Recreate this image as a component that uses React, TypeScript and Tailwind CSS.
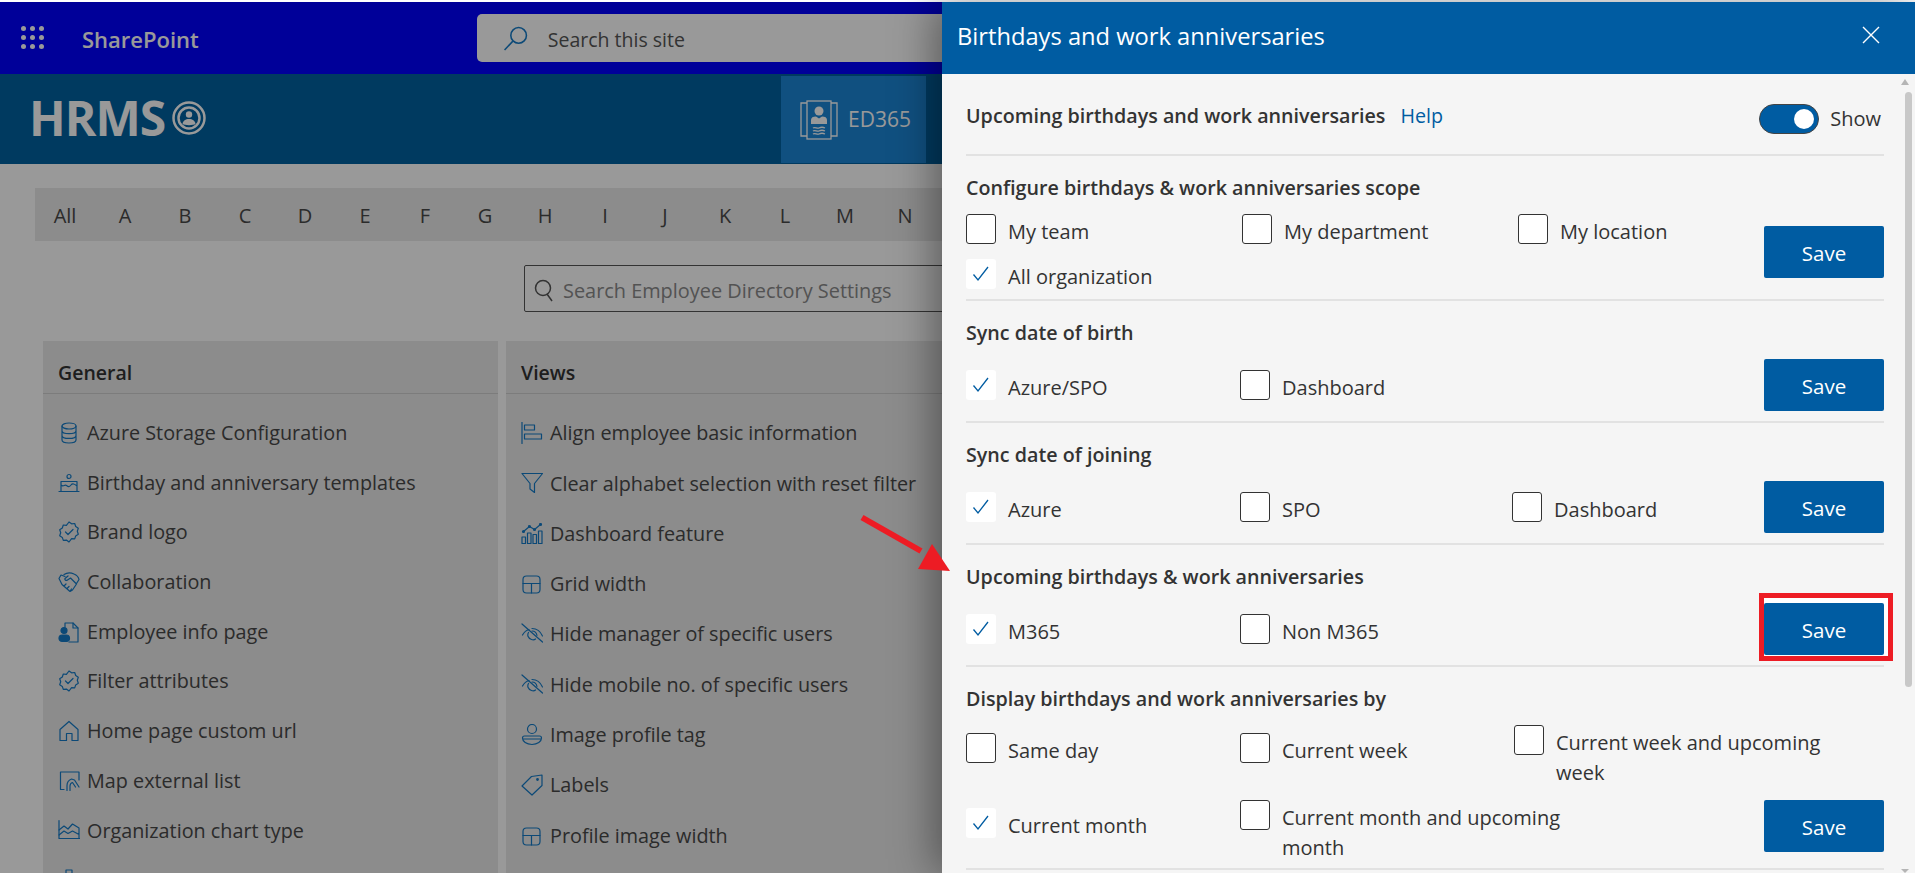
import type { ReactNode } from "react";

const Svg = ({ children }: { children: ReactNode }) => (
  <svg viewBox="0 0 22 22" fill="none" stroke="currentColor" strokeWidth="1.2" strokeLinecap="round" strokeLinejoin="round" className="w-[22px] h-[22px] shrink-0 text-[#157bc7]">
    {children}
  </svg>
);

const DatabaseIcon = () => (
  <Svg>
    <ellipse cx="11" cy="4" rx="7" ry="3" />
    <path d="M4 4v14c0 1.7 3.1 3 7 3s7-1.3 7-3V4M4 8.7c0 1.7 3.1 3 7 3s7-1.3 7-3M4 13.4c0 1.7 3.1 3 7 3s7-1.3 7-3" />
  </Svg>
);
const CakeIcon = () => (
  <Svg>
    <circle cx="11" cy="4.500" r="2" />
    <path d="M1 19.500h20M3 19.500V9.500h16v10M3 13c2.500 2.500 3.500-1 5.500 0.500s3 1.500 4.500-0.500 3.500-1 6 1" />
  </Svg>
);
const BadgeIcon = () => (
  <Svg>
    <path d="M11 1l2.600 1.800 3.100-.3 1 3 2.600 1.700-1 3 1 3-2.600 1.700-1 3-3.100-.3L11 21l-2.600-1.900-3.100.3-1-3-2.600-1.700 1-3-1-3 2.600-1.700 1-3 3.100.3z" />
    <path d="M7.500 11l2.500 2.500 5-5" />
  </Svg>
);
const HandshakeIcon = () => (
  <Svg>
    <path d="M6 3.500C9 1.500 13 1.500 16 3c2.500 1 4.500 3 5 5.500l-2.500 4M1 7.500l2-3.500 4 1.500M1 7.500l3 6 8 7 2.500-1.500 2-3 2-3-6-6-3 2c-1.500 1-3 0-2.500-1.500L10 5M6 15l2-2M9 17.500l2-2M12 20l1.500-2" />
  </Svg>
);
const EmployeePageIcon = () => (
  <Svg>
    <path d="M7 6V2h8l5 5v14H11" />
    <path d="M15 2v5h5" />
    <circle cx="6" cy="9.500" r="3" fill="currentColor" />
    <rect x="1" y="14" width="10.500" height="6.500" rx="3.200" fill="currentColor" />
  </Svg>
);
const HomeIcon = () => (
  <Svg>
    <path d="M2 9.500L11 1.500l9 8V20.500h-6v-7H8.500v7H2z" />
  </Svg>
);
const MapIcon = () => (
  <Svg>
    <path d="M2.500 19.500V2H21v8M2.500 19.500H6" />
    <path d="M9 20.500v-5c0-3 2-5.500 4.500-6.500l3 1 4.500 7M12 20.500v-4.500c0-1.500 1-3 2.500-3.500l3 4.500" />
  </Svg>
);
const ChartIcon = () => (
  <Svg>
    <path d="M1 1.500v18h20.500" />
    <path d="M1 11l5-4 4 3 4.500-5 6.500 4v10.500M1 16l5-4 4 2.500 4.500-2.500 6.500 3.500" />
  </Svg>
);
const OrgIcon = () => (
  <Svg>
    <rect x="8" y="1" width="6" height="5" />
    <path d="M11 6v6M3 18v-6h16v6" />
  </Svg>
);
const AlignIcon = () => (
  <Svg>
    <path d="M1 0.500v21" />
    <rect x="3.500" y="3" width="10" height="5" />
    <rect x="3.500" y="12" width="17" height="5" />
  </Svg>
);
const FunnelIcon = () => (
  <Svg>
    <path d="M1 1.500h20.500l-8 10v9l-4.500-3.500v-5.500z" />
  </Svg>
);
const BarsIcon = () => (
  <Svg>
    <rect x="1" y="14" width="3.500" height="6.500" />
    <rect x="6.500" y="10" width="3.500" height="10.500" />
    <rect x="12" y="11.500" width="3.500" height="9" />
    <rect x="17.500" y="8" width="3.500" height="12.500" />
    <path d="M2.500 8.500l6-5 5 3 6-5" />
    <circle cx="2.500" cy="8.500" r="1" />
    <circle cx="8.500" cy="3.500" r="1" />
    <circle cx="13.500" cy="6.500" r="1" />
    <circle cx="19.500" cy="1.500" r="1" />
  </Svg>
);
const LayoutIcon = () => (
  <Svg>
    <rect x="2" y="3" width="17" height="17" rx="3.500" />
    <path d="M2 10.500h17M10.500 10.500V20" />
  </Svg>
);
const EyeOffIcon = () => (
  <Svg>
    <path d="M1 1l20.500 18" />
    <path d="M1.500 12C3.500 8.500 6 7 8 6.500M11 5.500c4.500 0 8.500 3 10.500 7.500M7.500 9.500c-1.500 2.500-.5 6 3 7 1.500.5 3 .3 4-.5M11 8c2.500 0 4.500 2 5 4.500" />
  </Svg>
);
const UserIcon = () => (
  <Svg>
    <circle cx="11" cy="5" r="4.500" />
    <path d="M3.500 12h15c1 0 2 .8 2 2 0 3.500-4 6.500-9.500 6.500S1.500 17.500 1.500 14c0-1.200 1-2 2-2zM1.700 15h18.600" />
  </Svg>
);
const TagIcon = () => (
  <Svg>
    <path d="M1 12L10.500 2.500 21 1v10.500L11 21z" />
    <circle cx="16.500" cy="5.500" r="0.800" fill="currentColor" />
  </Svg>
);

const general: [ReactNode, string][] = [
  [<DatabaseIcon />, "Azure Storage Configuration"],
  [<CakeIcon />, "Birthday and anniversary templates"],
  [<BadgeIcon />, "Brand logo"],
  [<HandshakeIcon />, "Collaboration"],
  [<EmployeePageIcon />, "Employee info page"],
  [<BadgeIcon />, "Filter attributes"],
  [<HomeIcon />, "Home page custom url"],
  [<MapIcon />, "Map external list"],
  [<ChartIcon />, "Organization chart type"],
  [<OrgIcon />, "Organization"],
];

const views: [ReactNode, string][] = [
  [<AlignIcon />, "Align employee basic information"],
  [<FunnelIcon />, "Clear alphabet selection with reset filter"],
  [<BarsIcon />, "Dashboard feature"],
  [<LayoutIcon />, "Grid width"],
  [<EyeOffIcon />, "Hide manager of specific users"],
  [<EyeOffIcon />, "Hide mobile no. of specific users"],
  [<UserIcon />, "Image profile tag"],
  [<TagIcon />, "Labels"],
  [<LayoutIcon />, "Profile image width"],
];

const letters = ["All", "A", "B", "C", "D", "E", "F", "G", "H", "I", "J", "K", "L", "M", "N"];

const Card = ({ title, items, rowClass }: { title: string; items: [ReactNode, string][]; rowClass: string }) => (
  <div className="w-[455px] shrink-0 bg-[#e9e9e9]">
    <div className="h-[53px] flex items-center px-[15px] pt-[12px] border-b border-[#cfcfcf] text-[19.500px] font-semibold text-[#333]">{title}</div>
    <div className="pt-[14px] px-[15px]">
      {items.map(([icon, label]) => (
        <div key={label} className={`${rowClass} flex items-center gap-[7px] text-[#484848] text-[19.800px] whitespace-nowrap`}>
          {icon}
          <span>{label}</span>
        </div>
      ))}
    </div>
  </div>
);

const Option = ({ label, checked, className }: { label: string; checked?: boolean; className?: string }) => (
  <div className={`flex items-start gap-3 ${className ?? ""}`}>
    {checked ? (
      <div className="w-[30px] h-[30px] shrink-0 rounded-[3px] bg-white flex items-center justify-center">
        <svg viewBox="0 0 18 18" fill="none" stroke="#005ca2" strokeWidth="1.3" className="w-[18px] h-[18px]">
          <path d="M1.500 9.500L6 15 16 2" />
        </svg>
      </div>
    ) : (
      <div className="w-[30px] h-[30px] shrink-0 rounded-[3px] bg-white border border-[#333]" />
    )}
    <span className="leading-[30px] mt-[3px] -mb-[3px] text-[20px] text-[#333] whitespace-pre">{label}</span>
  </div>
);

const Save = ({ highlight }: { highlight?: boolean }) => (
  <div className="relative w-[120px] h-[52px] shrink-0">
    {highlight && <div className="absolute -left-[5px] -right-[9px] -top-[10px] -bottom-[6px] border-[5px] border-[#ed1c24] bg-white" />}
    <button className="relative w-full h-full pt-[3px] rounded-[2px] bg-[#005ca2] text-white text-[20.500px]">Save</button>
  </div>
);

const Section = ({ title, children }: { title: string; children: ReactNode }) => (
  <div className="pt-[19px] pb-[10px] border-b-2 border-[#e2e2e2]">
    <h3 className="h-[26px] leading-[26px] mb-[13px] text-[19.700px] font-semibold text-[#333]">{title}</h3>
    {children}
  </div>
);

export default function App() {
  return (
    <div className="relative w-[1915px] h-[873px] overflow-hidden bg-white pt-[2px]" style={{ fontFamily: '"Open Sans", sans-serif' }}>
      {/* suite bar */}
      <div className="h-[72px] bg-[#0000ff] flex items-center text-white">
        <div className="grid grid-cols-3 gap-x-[4px] gap-y-[4px] ml-[21px] -mt-[2px]">
          {Array.from({ length: 9 }).map((_, i) => (
            <span key={i} className="w-[5px] h-[5px] rounded-full bg-white" />
          ))}
        </div>
        <span className="ml-[38px] mt-[3px] text-[22px] font-semibold">SharePoint</span>
        <div className="ml-[278px] w-[520px] h-[48px] rounded-[5px] bg-white flex items-center pl-[26px] text-[#555]">
          <svg viewBox="0 0 24 24" fill="none" stroke="#157bc7" strokeWidth="1.5" className="w-[25px] h-[25px]">
            <circle cx="15" cy="9" r="7.500" />
            <path d="M9.500 14.500L1.500 23" />
          </svg>
          <span className="ml-[20px] mt-[3px] text-[19.500px]">Search this site</span>
        </div>
      </div>

      {/* site header */}
      <div className="h-[90px] bg-[#0061a0] flex text-white">
        <div className="ml-[29px] mt-[19px] flex items-center gap-[7px] h-[50px]">
          <span className="text-[48px] font-bold tracking-[-1px]">HRMS</span>
          <svg viewBox="0 0 34 34" fill="none" stroke="white" strokeWidth="2.500" className="w-[34px] h-[34px]">
            <circle cx="17" cy="17" r="15.500" />
            <circle cx="17" cy="17" r="10.500" />
            <circle cx="17" cy="13.500" r="3.200" fill="white" stroke="none" />
            <path d="M10.500 23c.5-3.500 3-5 6.500-5s6 1.500 6.500 5c-2 1.500-11 1.500-13 0z" fill="white" stroke="none" />
          </svg>
        </div>
        <div className="ml-[575px] mt-[2px] w-[145px] h-[87px] bg-[#1b85d5] flex items-center pl-[19px] gap-[10px]">
          <svg viewBox="0 0 38 40" fill="none" stroke="white" strokeWidth="1.300" className="w-[38px] h-[40px]">
            <path d="M7 3H1v33h6M31 3h6v33h-6" />
            <rect x="7" y="1" width="24" height="38" />
            <circle cx="19" cy="11" r="4.500" fill="white" stroke="none" />
            <path d="M11 24v-4c0-2.500 2-3.500 5-3.500l3 2 3-2c3 0 5 1 5 3.500v4z" fill="white" stroke="none" />
            <path d="M13 28c2-1.500 4 1 6 0s4-1 6 0M13 31c2-1.500 4 1 6 0s4-1 6 0M13 34c2-1.500 4 1 6 0s4-1 6 0" />
          </svg>
          <span className="text-[21px]">ED365</span>
        </div>
      </div>

      {/* alphabet filter */}
      <div className="mt-[24px] ml-[35px] h-[53px] pt-[3px] bg-[#e9e9e9] flex items-center text-[20px] text-[#484848]">
        {letters.map((l) => (
          <span key={l} className="w-[60px] shrink-0 text-center">{l}</span>
        ))}
      </div>

      {/* settings search */}
      <div className="mt-[24px] ml-[524px] w-[600px] h-[47px] bg-white border border-[#555] rounded-[2px] flex items-center pl-[9px] gap-[9px]">
        <svg viewBox="0 0 20 24" fill="none" stroke="#555" strokeWidth="1.500" className="w-[20px] h-[24px] mt-[2px]">
          <circle cx="9" cy="10" r="7.500" />
          <path d="M13 16l5 7" />
        </svg>
        <span className="mt-[4px] text-[19.900px] text-[#8a8a8a]">Search Employee Directory Settings</span>
      </div>

      {/* settings cards */}
      <div className="mt-[29px] ml-[43px] flex gap-[8px]">
        <Card title="General" items={general} rowClass="h-[49.700px]" />
        <Card title="Views" items={views} rowClass="h-[50.300px]" />
      </div>

      {/* dimmed layer */}
      <div className="absolute inset-x-0 top-[2px] bottom-0 bg-black/40" />

      {/* side panel */}
      <div className="absolute left-[942px] top-[2px] bottom-0 right-0 bg-[#f5f5f5] shadow-[-8px_0_40px_rgba(0,0,0,0.4)]">
        <div className="h-[72px] bg-[#005ca2] flex items-center justify-between pl-[15px] pr-[35px] text-white">
          <span className="text-[23.700px] -mt-[2px]">Birthdays and work anniversaries</span>
          <svg viewBox="0 0 18 18" stroke="white" strokeWidth="1.400" className="w-[18px] h-[18px] -mt-[6px]">
            <path d="M1 1l16 16M17 1L1 17" />
          </svg>
        </div>

        <div className="pl-[24px] pr-[31px]">
          <div className="h-[80px] box-content border-b-2 border-[#e2e2e2] flex items-center justify-between">
            <div className="flex gap-[15px] mt-[4px] text-[19.700px]">
              <span className="font-semibold text-[#333]">Upcoming birthdays and work anniversaries</span>
              <a className="text-[#005ca2]">Help</a>
            </div>
            <div className="flex items-center gap-[11px] mt-[9px] mr-[3px]">
              <div className="w-[60px] h-[30px] rounded-full bg-[#005ca2] border border-[#444] flex items-center justify-end pr-[4px]">
                <span className="w-[20px] h-[20px] rounded-full bg-white" />
              </div>
              <span className="text-[20px] text-[#333]">Show</span>
            </div>
          </div>

          <Section title="Configure birthdays & work anniversaries scope">
            <div className="flex items-center justify-between">
              <div className="w-[798px] grid grid-cols-[276px_276px_1fr] gap-y-[15px]">
                <Option label="My team" />
                <Option label="My department" />
                <Option label="My location" />
                <Option label="All organization" checked />
              </div>
              <Save />
            </div>
          </Section>

          <Section title="Sync date of birth">
            <div className="flex items-center justify-between">
              <div className="w-[798px] grid grid-cols-[274px_272px_1fr]">
                <Option label="Azure/SPO" checked />
                <Option label="Dashboard" />
              </div>
              <Save />
            </div>
          </Section>

          <Section title="Sync date of joining">
            <div className="flex items-center justify-between">
              <div className="w-[798px] grid grid-cols-[274px_272px_1fr]">
                <Option label="Azure" checked />
                <Option label="SPO" />
                <Option label="Dashboard" />
              </div>
              <Save />
            </div>
          </Section>

          <Section title="Upcoming birthdays & work anniversaries">
            <div className="mt-[2px] flex items-center justify-between">
              <div className="w-[798px] grid grid-cols-[274px_272px_1fr]">
                <Option label="M365" checked />
                <Option label="Non M365" />
              </div>
              <Save highlight />
            </div>
          </Section>

          <Section title="Display birthdays and work anniversaries by">
            <div className="mt-[1px] -mb-[2px] grid grid-cols-[274px_274px_1fr] grid-rows-[60px_60px] gap-y-[15px]">
              <Option label="Same day" className="mt-[8px]" />
              <Option label="Current week" className="mt-[8px]" />
              <Option label={"Current week and upcoming\nweek"} />
              <Option label="Current month" checked className="mt-[8px]" />
              <Option label={"Current month and upcoming\nmonth"} />
              <div className="justify-self-end">
                <Save />
              </div>
            </div>
          </Section>
        </div>

        {/* scrollbar */}
        <div className="absolute right-[6px] top-[77px] w-0 h-0 border-x-[4px] border-x-transparent border-b-[6px] border-b-[#b5b5b5]" />
        <div className="absolute right-[3px] top-[90px] w-[7px] h-[595px] rounded-full bg-[#c8c8c8]" />
        <div className="absolute right-[6px] bottom-0 w-0 h-0 border-x-[4px] border-x-transparent border-t-[4px] border-t-[#b5b5b5]" />
      </div>

      {/* callout arrow */}
      <svg viewBox="0 0 100 70" className="absolute left-[855px] top-[510px] w-[100px] h-[70px]">
        <path d="M7 7.500L66 41" stroke="#ed1c24" strokeWidth="6" />
        <path d="M95 61L77 34 63 59z" fill="#ed1c24" />
      </svg>
    </div>
  );
}
